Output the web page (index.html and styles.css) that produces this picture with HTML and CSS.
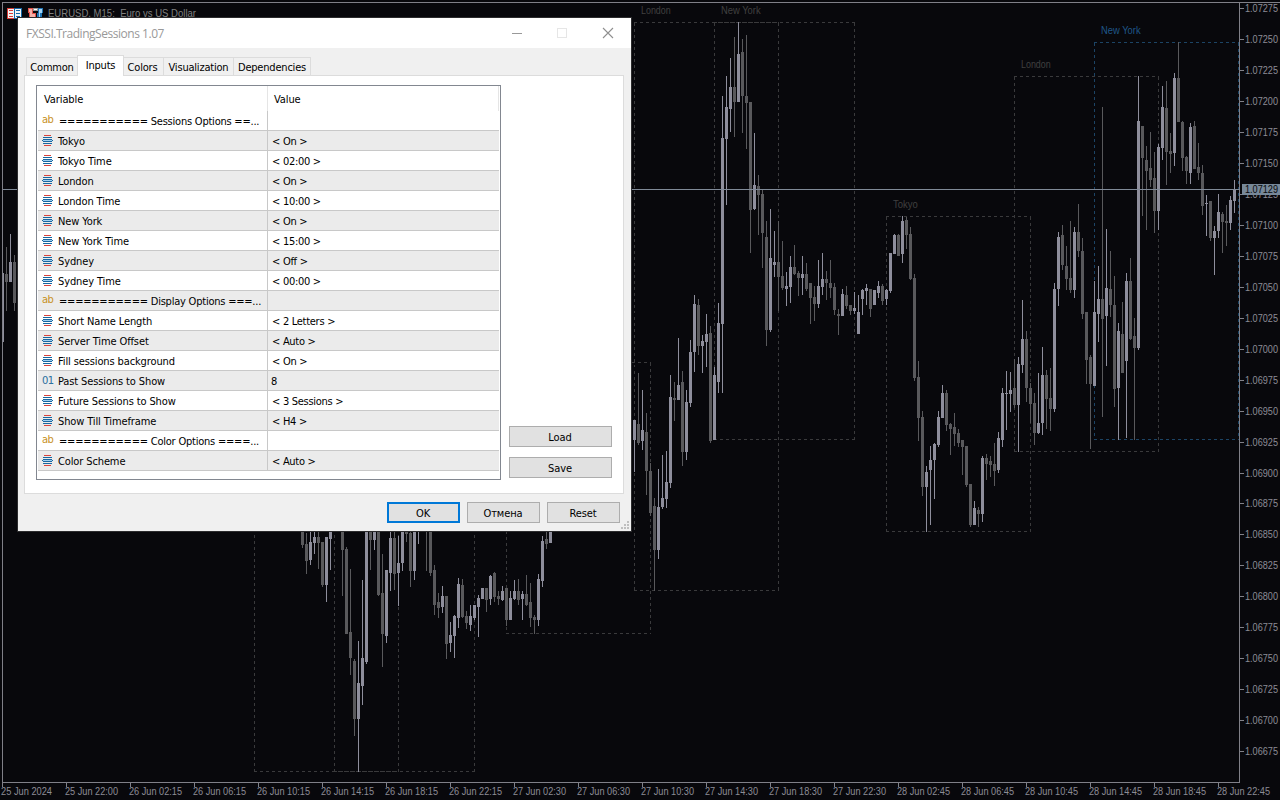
FILE: index.html
```html
<!DOCTYPE html>
<html lang="en">

<head>
    <meta charset="UTF-8">
    <meta name="viewport" content="width=device-width, initial-scale=1.0">
    <title>EURUSD, M15</title>
    <link rel="stylesheet" href="styles.css">
</head>

<body>
    <svg class="chart" width="1280" height="800" viewBox="0 0 1280 800">
        <g id="sessions"></g>
        <g id="candles"></g>
        <g id="axis"></g>
        <!-- chart title icons -->
        <g shape-rendering="crispEdges">
            <rect x="7" y="8" width="8" height="11" fill="#d83b35"></rect>
            <rect x="14" y="8" width="8" height="11" fill="#1468a8"></rect>
            <path d="M8 9h6v9h-6zM15 9h6v9h-6z" fill="#f4f4f4"></path>
            <path d="M9 10.5h4M9 13.5h4M9 16.5h4" stroke="#d83b35"></path>
            <path d="M16 10.5h4M16 13.5h4M16 16.5h4" stroke="#1468a8"></path>
            <path d="M28 8h5v5h3v5h-7v-5h-1z" fill="#e25048"></path>
            <path d="M29 9h3v5h3v4h-5v-6h-1z" fill="#f3b0a8"></path>
            <path d="M38 8h5v5h-1v5h-5v-5h1z" fill="#1d74b5"></path>
            <path d="M39 9h3v4h-2v4h-1z" fill="#a8d4f2"></path>
            <path d="M33 8h5v3h-5z" fill="#9a9a9a"></path>
            <path d="M34 9h3v1h-3z" fill="#ffffff"></path>
        </g>
    </svg>

    <div class="dialog">
        <div class="title-bar">
            <span class="title">FXSSI.TradingSessions 1.07</span>
            <svg class="win-btns" width="104" height="12" viewBox="0 0 104 12">
                <path d="M1 6.5h10" stroke="#999"></path>
                <rect x="46.5" y="1.5" width="9" height="9" fill="none" stroke="#e6e6e6"></rect>
                <path d="M92 1l10 10M102 1l-10 10" stroke="#8f8f8f" stroke-width="1.1"></path>
            </svg>
        </div>

        <ul class="tabs">
            <li class="tab tab-common">Common</li>
            <li class="tab tab-inputs active">Inputs</li>
            <li class="tab tab-colors">Colors</li>
            <li class="tab tab-visual">Visualization</li>
            <li class="tab tab-depend">Dependencies</li>
        </ul>

        <div class="pane">
            <div class="table">
                <div class="thead">
                    <div class="th">Variable</div>
                    <div class="th th-value">Value</div>
                </div>
                <div id="rows"></div>
            </div>
            <div class="side-btns">
                <button class="btn wide">Load</button>
                <button class="btn wide">Save</button>
            </div>
        </div>

        <div class="footer">
            <button class="btn ok">OK</button>
            <button class="btn">Отмена</button>
            <button class="btn">Reset</button>
        </div>

        <svg class="grip" width="9" height="9" viewBox="0 0 9 9" shape-rendering="crispEdges">
            <path d="M6 0h2v2h-2zM3 3h2v2h-2zM6 3h2v2h-2zM0 6h2v2h-2zM3 6h2v2h-2zM6 6h2v2h-2z" fill="#bfbfbf"></path>
        </svg>
    </div>

    <script src="chart.js"></script>
</body>

</html>
```

FILE: styles.css
```css
* {
    margin: 0;
    padding: 0;
    box-sizing: border-box;
}

li {
    list-style: none;
}

body {
    width: 1280px;
    height: 800px;
    overflow: hidden;
    position: relative;
    background-color: #08080c;
    font-family: "DejaVu Sans Condensed", "DejaVu Sans", sans-serif;
    font-stretch: condensed;
    font-size: 11px;
    color: #000;
}

.chart {
    display: block;
}

.axis-text {
    font-family: "Liberation Sans", sans-serif;
    font-size: 10px;
    fill: #8c8c96;
}

.price-now {
    fill: #08080c;
}

.label {
    font-family: "Liberation Sans", sans-serif;
    font-size: 10px;
    white-space: pre;
    fill: #404040;
}

.label.blue {
    fill: #1f5688;
}

.label.head {
    fill: #808080;
}

/* dialog window */
.dialog {
    position: absolute;
    left: 18px;
    top: 18px;
    width: 613px;
    height: 513px;
    background-color: #f0f0f0;
    box-shadow: 0 0 0 1px #2c2c2e;
}

.title-bar {
    display: flex;
    justify-content: space-between;
    align-items: center;
    height: 30px;
    padding: 0 16px 0 8px;
    background-color: #fff;
}

.title {
    font-family: "Open Sans", "Noto Sans", sans-serif;
    font-stretch: normal;
    font-size: 12px;
    letter-spacing: -0.47px;
    color: #999;
}

.tabs {
    display: flex;
    align-items: flex-end;
    height: 28px;
    padding-left: 8px;
    position: relative;
    z-index: 1;
}

.tab {
    height: 19px;
    border: 1px solid #dcdcdc;
    border-left: none;
    line-height: 19px;
    text-align: center;
    white-space: nowrap;
    letter-spacing: -0.2px;
}

.tab.active {
    height: 21px;
    border-left: 1px solid #dcdcdc;
    border-bottom: none;
    line-height: 19px;
    background-color: #fff;
}

.tab-common {
    width: 51px;
    border-left: 1px solid #dcdcdc;
    border-right: none;
}

.tab-inputs {
    width: 47px;
}

.tab-colors {
    width: 40px;
    padding-right: 2px;
}

.tab-visual {
    width: 70px;
}

.tab-depend {
    width: 77px;
}

.pane {
    display: flex;
    width: 600px;
    height: 419px;
    margin: -1px 0 0 6px;
    padding: 9px 0 0 11px;
    border: 1px solid #dcdcdc;
    background-color: #fff;
}

.table {
    width: 465px;
    height: 395px;
    padding: 0 1px;
    border: 1px solid #828790;
}

.thead {
    display: flex;
    height: 25px;
    line-height: 27px;
}

.th {
    width: 230px;
    padding-left: 6px;
    border-right: 1px solid #e5e5e5;
    letter-spacing: -0.1px;
}

.th-value {
    width: 231px;
}

.row {
    display: flex;
    height: 20px;
    line-height: 21px;
    border-bottom: 1px solid #c8c8c8;
}

.row:nth-child(even) {
    background-color: #ebebeb;
}

.cell {
    display: flex;
    width: 230px;
    height: 19px;
    padding-left: 4px;
    border-right: 1px solid #c8c8c8;
    white-space: pre;
    letter-spacing: -0.12px;
}

.cell.group {
    letter-spacing: -0.22px;
}

.cell svg {
    flex: none;
    width: 11px;
    height: 11px;
    margin: 4px 5px 0 0;
}

.cell .tag {
    width: 17px;
    line-height: 18px;
    font-size: 11px;
    letter-spacing: -0.6px;
    color: #c8911f;
}

.cell .tag.num {
    width: 16px;
    font-family: "DejaVu Sans", sans-serif;
    font-stretch: normal;
    font-size: 10px;
    line-height: 19px;
    color: #2a6f9e;
}

.cell .name,
.cell.value {
    line-height: 22px;
}

.cell.value {
    width: 231px;
    border-right: none;
    letter-spacing: -0.28px;
}

.cell.plain {
    padding-left: 3px;
}

.side-btns {
    display: flex;
    flex-direction: column;
    gap: 10px;
    padding: 341px 0 0 8px;
}

.btn {
    width: 73px;
    height: 21px;
    padding: 2px 1px 0 0;
    border: 1px solid #adadad;
    background-color: #e1e1e1;
    font: inherit;
    letter-spacing: -0.1px;
    color: #000;
}

.btn.wide {
    width: 103px;
}

.btn.ok {
    border: 2px solid #0078d7;
}

.footer {
    display: flex;
    justify-content: flex-end;
    gap: 7px;
    padding: 8px 11px 0 0;
}

.grip {
    position: absolute;
    right: 1px;
    bottom: 1px;
}
```

FILE: chart.js
```js
var NS = "http://www.w3.org/2000/svg";

// x, wick top, wick bottom, body top, body bottom, 1 = up
var candles = [
    [2, 273, 342, 273, 342, 1], [6, 247, 311, 274, 282, 0], [10, 234, 282, 262, 282, 1],
    [14, 255, 311, 262, 303, 0], [18, 260, 301, 260, 301, 0],
    [302, 500, 548, 500, 545, 0], [306, 533, 574, 544, 561, 0], [310, 528, 565, 542, 560, 1],
    [314, 528, 554, 537, 543, 1], [318, 528, 569, 537, 543, 0], [322, 542, 587, 542, 585, 0],
    [326, 537, 602, 537, 585, 1], [330, 500, 570, 500, 539, 1], [342, 500, 596, 500, 550, 0],
    [346, 547, 634, 549, 634, 0], [350, 569, 675, 632, 658, 0], [354, 659, 736, 661, 719, 0],
    [358, 641, 772, 683, 719, 1], [362, 580, 705, 658, 686, 1], [366, 500, 664, 500, 662, 1],
    [370, 500, 570, 500, 540, 0], [374, 500, 550, 500, 540, 1], [378, 500, 596, 500, 595, 0],
    [382, 554, 667, 593, 634, 0], [386, 570, 643, 570, 636, 1], [390, 528, 591, 538, 573, 1],
    [394, 528, 590, 538, 574, 0], [398, 536, 606, 563, 573, 1], [402, 500, 571, 500, 563, 1],
    [406, 500, 542, 500, 534, 0], [410, 532, 587, 533, 571, 0], [414, 500, 580, 500, 571, 1],
    [418, 500, 544, 500, 528, 1], [426, 500, 571, 500, 528, 0], [430, 500, 576, 532, 573, 0],
    [434, 565, 615, 570, 605, 0], [438, 593, 618, 602, 608, 0], [442, 586, 613, 596, 607, 1],
    [446, 596, 659, 596, 644, 0], [450, 622, 652, 635, 643, 1], [454, 615, 658, 616, 636, 1],
    [458, 578, 628, 584, 618, 1], [462, 579, 618, 585, 617, 0], [466, 611, 629, 616, 623, 0],
    [470, 605, 631, 616, 625, 1], [474, 605, 620, 605, 618, 1], [478, 595, 637, 598, 607, 1],
    [482, 588, 599, 588, 599, 1], [486, 588, 612, 588, 600, 0], [490, 575, 605, 576, 599, 1],
    [494, 572, 602, 573, 597, 0], [498, 591, 605, 596, 599, 0], [502, 586, 601, 591, 600, 1],
    [506, 588, 626, 588, 620, 0], [510, 591, 620, 598, 620, 1], [514, 580, 600, 591, 599, 1],
    [518, 579, 605, 591, 600, 0], [522, 591, 620, 594, 599, 1], [526, 575, 606, 594, 605, 0],
    [530, 583, 627, 602, 618, 0], [534, 615, 634, 617, 620, 0], [538, 574, 626, 579, 620, 1],
    [542, 536, 587, 541, 581, 1], [546, 528, 549, 539, 544, 0], [550, 500, 543, 500, 543, 1],
    [630, 415, 440, 434, 440, 1], [634, 420, 472, 420, 440, 1], [638, 373, 445, 424, 443, 0],
    [642, 390, 450, 430, 441, 1], [646, 413, 495, 432, 471, 0], [650, 463, 516, 471, 513, 0],
    [654, 498, 591, 506, 550, 0], [658, 469, 559, 507, 550, 1], [662, 455, 509, 498, 507, 1],
    [666, 451, 508, 482, 499, 1], [670, 375, 488, 397, 483, 1], [674, 382, 421, 398, 400, 0],
    [678, 338, 400, 385, 400, 1], [682, 371, 466, 382, 452, 0], [686, 390, 460, 402, 452, 1],
    [690, 340, 407, 352, 403, 1], [694, 295, 372, 304, 352, 1], [698, 299, 355, 305, 346, 0],
    [702, 335, 373, 341, 346, 1], [706, 314, 367, 334, 342, 1], [710, 326, 443, 333, 441, 0],
    [714, 367, 440, 375, 440, 1], [718, 303, 393, 323, 382, 1], [722, 96, 393, 138, 324, 1],
    [726, 76, 205, 107, 139, 1], [730, 58, 132, 87, 109, 1], [734, 37, 137, 87, 102, 0],
    [738, 22, 102, 54, 102, 1], [742, 39, 133, 52, 96, 0], [746, 35, 149, 96, 103, 0],
    [750, 102, 253, 102, 210, 0], [754, 133, 210, 185, 209, 1], [758, 175, 235, 186, 195, 0],
    [762, 189, 268, 194, 233, 0], [766, 221, 346, 237, 330, 0], [770, 209, 332, 258, 330, 1],
    [774, 231, 277, 262, 265, 1], [778, 221, 311, 262, 277, 0], [782, 241, 290, 276, 288, 0],
    [786, 272, 306, 286, 289, 1], [790, 256, 303, 267, 287, 1], [794, 245, 275, 267, 274, 0],
    [798, 271, 296, 273, 278, 0], [802, 256, 295, 274, 278, 1], [806, 263, 291, 274, 289, 0],
    [810, 283, 324, 283, 298, 0], [814, 286, 321, 297, 304, 0], [818, 260, 308, 286, 304, 1],
    [822, 253, 295, 279, 287, 1], [826, 271, 300, 279, 283, 0], [830, 260, 298, 283, 288, 0],
    [834, 283, 315, 287, 310, 0], [838, 309, 335, 314, 316, 0], [842, 289, 316, 294, 316, 1],
    [846, 286, 309, 295, 306, 0], [850, 305, 315, 305, 311, 0], [854, 292, 314, 308, 311, 1],
    [858, 295, 334, 312, 334, 1], [862, 289, 315, 290, 299, 1], [866, 284, 305, 288, 291, 1],
    [870, 289, 317, 289, 309, 0], [874, 290, 305, 290, 305, 1], [878, 281, 298, 286, 293, 1],
    [882, 284, 305, 286, 301, 0], [886, 289, 305, 290, 299, 1], [890, 253, 293, 253, 291, 1],
    [894, 234, 254, 235, 254, 1], [898, 234, 256, 235, 256, 0], [902, 216, 263, 221, 254, 1],
    [906, 217, 249, 220, 235, 0], [910, 227, 280, 234, 279, 0], [914, 274, 381, 278, 378, 0],
    [918, 361, 441, 377, 418, 0], [922, 411, 496, 417, 487, 0], [926, 466, 532, 472, 487, 1],
    [930, 446, 525, 460, 470, 1], [934, 443, 499, 444, 460, 1], [938, 411, 447, 417, 445, 1],
    [942, 385, 418, 393, 418, 1], [946, 390, 431, 393, 425, 0], [950, 423, 455, 424, 429, 0],
    [954, 413, 446, 427, 434, 0], [958, 429, 447, 433, 443, 0], [962, 440, 475, 440, 447, 0],
    [966, 446, 487, 446, 485, 0], [970, 484, 527, 484, 525, 0], [974, 501, 525, 508, 525, 1],
    [978, 507, 527, 510, 514, 0], [982, 456, 522, 458, 514, 1], [986, 454, 480, 458, 464, 0],
    [990, 456, 477, 461, 465, 0], [994, 443, 486, 464, 471, 0], [998, 432, 473, 438, 470, 1],
    [1002, 388, 447, 393, 440, 1], [1006, 371, 430, 393, 394, 1], [1010, 372, 412, 390, 394, 1],
    [1014, 359, 408, 388, 405, 0], [1018, 357, 452, 364, 405, 1], [1022, 300, 373, 339, 365, 1],
    [1026, 331, 402, 339, 388, 0], [1030, 383, 423, 388, 404, 0], [1034, 393, 445, 403, 433, 0],
    [1038, 373, 434, 423, 433, 1], [1042, 347, 435, 375, 423, 1], [1046, 370, 429, 375, 399, 0],
    [1050, 368, 431, 398, 409, 0], [1054, 283, 412, 289, 409, 1], [1058, 232, 306, 237, 289, 1],
    [1062, 225, 270, 235, 265, 0], [1066, 246, 290, 266, 279, 0], [1070, 221, 293, 278, 290, 0],
    [1074, 227, 298, 232, 290, 1], [1078, 204, 257, 232, 251, 0], [1082, 238, 319, 251, 314, 0],
    [1086, 312, 384, 312, 360, 0], [1090, 355, 449, 357, 384, 0], [1094, 281, 386, 312, 386, 1],
    [1098, 266, 342, 299, 314, 1], [1102, 107, 417, 299, 319, 0], [1106, 229, 366, 288, 316, 1],
    [1110, 251, 317, 289, 305, 0], [1114, 276, 407, 305, 389, 0], [1118, 323, 440, 331, 388, 1],
    [1122, 302, 373, 334, 373, 0], [1126, 273, 438, 281, 361, 1], [1130, 258, 340, 281, 339, 0],
    [1134, 318, 440, 336, 348, 0], [1138, 76, 350, 121, 348, 1], [1142, 126, 216, 126, 158, 0],
    [1146, 146, 230, 160, 171, 0], [1150, 132, 187, 168, 180, 0], [1154, 152, 233, 178, 211, 0],
    [1158, 144, 230, 147, 211, 1], [1162, 86, 160, 107, 148, 1], [1166, 81, 185, 108, 152, 0],
    [1170, 133, 173, 151, 154, 0], [1174, 73, 166, 78, 153, 1], [1178, 42, 122, 78, 122, 0],
    [1182, 121, 171, 122, 158, 0], [1186, 156, 184, 157, 171, 0], [1190, 123, 184, 127, 173, 1],
    [1194, 121, 169, 126, 169, 0], [1198, 143, 180, 167, 173, 0], [1202, 165, 215, 173, 206, 0],
    [1206, 195, 236, 203, 204, 1], [1210, 201, 241, 201, 238, 0], [1214, 226, 275, 231, 238, 1],
    [1218, 194, 238, 212, 231, 1], [1222, 212, 253, 214, 222, 0], [1226, 205, 246, 221, 223, 0],
    [1230, 196, 230, 200, 223, 1], [1234, 180, 213, 189, 201, 1]
];

// left, top, right, bottom, name, color
var sessions = [
    [126, 400, 270, 531, "", ""],
    [254, 300, 398, 771, "", ""],
    [334, 300, 474, 771, "", ""],
    [506, 362, 650, 633, "", ""],
    [634, 22, 778, 590, "London", ""],
    [714, 22, 854, 439, "New York", ""],
    [886, 216, 1030, 531, "Tokyo", ""],
    [1014, 76, 1158, 451, "London", ""],
    [1094, 42, 1238, 439, "New York", "blue"]
];

var times = ["25 Jun 2024", "25 Jun 22:00", "26 Jun 02:15", "26 Jun 06:15", "26 Jun 10:15",
    "26 Jun 14:15", "26 Jun 18:15", "26 Jun 22:15", "27 Jun 02:30", "27 Jun 06:30",
    "27 Jun 10:30", "27 Jun 14:30", "27 Jun 18:30", "27 Jun 22:30", "28 Jun 02:45",
    "28 Jun 06:45", "28 Jun 10:45", "28 Jun 14:45", "28 Jun 18:45", "28 Jun 22:45"];

function add(parent, tag, attrs, text) {
    var el = document.createElementNS(NS, tag);
    for (var k in attrs) {
        el.setAttribute(k, attrs[k]);
    }
    if (text) el.textContent = text;
    parent.appendChild(el);
}

function rect(parent, x, y, w, h, fill) {
    add(parent, "rect", { x: x, y: y, width: w, height: h, fill: fill, "shape-rendering": "crispEdges" });
}

function label(parent, x, y, width, cls, text) {
    add(parent, "text", {
        x: x, y: y, "class": cls, textLength: width,
        lengthAdjust: "spacingAndGlyphs"
    }, text);
}

var gSessions = document.getElementById("sessions");
var gCandles = document.getElementById("candles");
var gAxis = document.getElementById("axis");

for (var i = 0; i < sessions.length; i++) {
    var s = sessions[i];
    var l = s[0] + 0.5, t = s[1] + 0.5, r = s[2] + 0.5, b = s[3] + 0.5;
    // each side on its own so the dashes start at the corner
    var d = "M" + (l - 0.5) + " " + t + "H" + r + "M" + (l - 0.5) + " " + b + "H" + r +
        "M" + l + " " + t + "V" + b + "M" + r + " " + t + "V" + b;
    add(gSessions, "path", {
        d: d, fill: "none", stroke: s[5] ? "#1c4465" : "#3a3a3c",
        "stroke-dasharray": "3 3", "shape-rendering": "crispEdges"
    });
    if (s[4]) {
        label(gSessions, s[0] + 7, s[1] - 8, s[4].length * 4.95, "label " + s[5], s[4]);
    }
}

for (var i = 0; i < candles.length; i++) {
    var c = candles[i];
    var fill = c[5] ? "#8e8e9c" : "#59595c";
    rect(gCandles, c[0], c[1], 1, c[2] - c[1], fill);
    rect(gCandles, c[0] - 1, c[3], 3, c[4] - c[3], fill);
}

// frame
rect(gAxis, 0, 0, 2, 782, "#08080c");
rect(gAxis, 2, 2, 1278, 1, "#808088");
rect(gAxis, 2, 2, 1, 781, "#808088");
rect(gAxis, 1239, 2, 1, 781, "#808088");
rect(gAxis, 2, 782, 1238, 1, "#808088");
rect(gAxis, 3, 189, 1237, 1, "#808a98");

for (var i = 0; i < 25; i++) {
    var y = Math.round(8.4 + i * 30.94);
    rect(gAxis, 1240, y, 4, 1, "#808088");
    label(gAxis, 1245, y + 4, 33, "axis-text", (1.07275 - i * 0.00025).toFixed(5));
}
rect(gAxis, 1242, 184, 38, 11, "#778899");
label(gAxis, 1245, 193, 33, "axis-text price-now", "1.07129");

for (var i = 0; i < times.length; i++) {
    rect(gAxis, 2 + i * 64, 783, 1, 4, "#808088");
    label(gAxis, 1 + i * 64, 795, i ? 53 : 51, "axis-text", times[i]);
}

label(gAxis, 48, 17, 148, "label head", "EURUSD, M15:  Euro vs US Dollar");

// inputs table
var inputs = [
    ["ab", "=========== Sessions Options ==...", ""],
    ["enum", "Tokyo", "< On >"],
    ["enum", "Tokyo Time", "< 02:00 >"],
    ["enum", "London", "< On >"],
    ["enum", "London Time", "< 10:00 >"],
    ["enum", "New York", "< On >"],
    ["enum", "New York Time", "< 15:00 >"],
    ["enum", "Sydney", "< Off >"],
    ["enum", "Sydney Time", "< 00:00 >"],
    ["ab", "=========== Display Options ===...", ""],
    ["enum", "Short Name Length", "< 2 Letters >"],
    ["enum", "Server Time Offset", "< Auto >"],
    ["enum", "Fill sessions background", "< On >"],
    ["01", "Past Sessions to Show", "8"],
    ["enum", "Future Sessions to Show", "< 3 Sessions >"],
    ["enum", "Show Till Timeframe", "< H4 >"],
    ["ab", "=========== Color Options ====...", ""],
    ["enum", "Color Scheme", "< Auto >"]
];

var icons = {
    "ab": '<span class="tag">ab</span>',
    "01": '<span class="tag num">01</span>',
    "enum": '<svg viewBox="0 0 11 11" shape-rendering="crispEdges">' +
        '<path d="M2 .5h7M2 10.5h7" stroke="#d8433c"></path>' +
        '<path d="M1 2.5h9M1 8.5h9" stroke="#1766a0"></path>' +
        '<path d="M1 4h9v1h1v1h-1v1h-9v-1h-1v-1h1z" fill="#1766a0"></path>' +
        '<path d="M1 5.5h9" stroke="#9fd0f0"></path></svg>'
};

var html = "";
for (var i = 0; i < inputs.length; i++) {
    var row = inputs[i];
    html += '<div class="row"><div class="cell' + (row[0] == "ab" ? " group" : "") + '">' +
        icons[row[0]] + '<span class="name">' + row[1] + "</span></div>" +
        '<div class="cell value' + (row[0] == "01" ? " plain" : "") + '">' +
        row[2].replace("<", "&lt;").replace(">", "&gt;") + "</div></div>";
}
document.getElementById("rows").innerHTML = html;
```
